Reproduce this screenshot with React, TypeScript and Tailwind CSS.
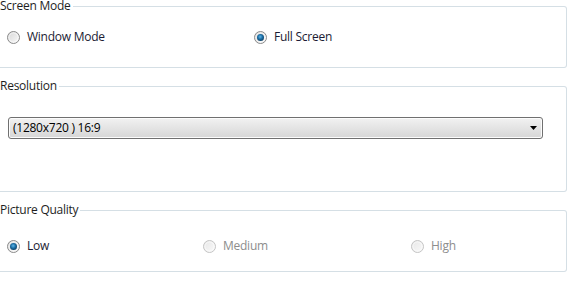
import React from "react";

type RadioState = "off" | "on" | "disabled";

function Radio({ state }: { state: RadioState }) {
  const id = React.useId().replace(/:/g, "");
  const border = state === "disabled" ? "#c4c4c4" : "#8a8a8a";
  return (
    <svg width="13" height="13" viewBox="0 0 13 13" className="shrink-0">
      <defs>
        <linearGradient id={`f${id}`} x1="0" y1="0" x2="1" y2="1">
          <stop offset="0" stopColor={state === "disabled" ? "#e6e6e6" : "#d6d6d6"} />
          <stop offset="1" stopColor={state === "disabled" ? "#fafafa" : "#fbfbfb"} />
        </linearGradient>
        <radialGradient id={`d${id}`} cx="0.45" cy="0.4" r="0.65">
          <stop offset="0" stopColor="#5fb6e8" />
          <stop offset="0.5" stopColor="#1c6fa6" />
          <stop offset="1" stopColor="#0c3a5e" />
        </radialGradient>
      </defs>
      <circle cx="6.5" cy="6.5" r="6" fill={`url(#f${id})`} stroke={border} strokeWidth="1" />
      <circle cx="6.5" cy="6.5" r="4.6" fill="none" stroke="#ffffff" strokeOpacity="0.7" strokeWidth="0.8" />
      {state === "on" && <circle cx="6.5" cy="6.5" r="3.5" fill={`url(#d${id})`} />}
    </svg>
  );
}

function RadioItem({ label, state, className }: { label: string; state: RadioState; className?: string }) {
  return (
    <div className={`flex items-center gap-[7px] ${className ?? ""}`}>
      <Radio state={state} />
      <span className={`text-[12px] leading-[16px] tracking-[-0.25px] ${state === "disabled" ? "text-[#8d8d8d]" : "text-[#1b1b33]"}`}>
        {label}
      </span>
    </div>
  );
}

function Group({ title, className, children }: { title: string; className?: string; children: React.ReactNode }) {
  return (
    <fieldset className={`border border-l-0 border-[#d5dfe5] rounded-r-[3px] ${className ?? ""}`}>
      <legend className="pr-[2px] text-[12px] leading-[12px] tracking-[-0.25px] text-[#1e1e1e]">{title}</legend>
      {children}
    </fieldset>
  );
}

export default function App() {
  return (
    <div
      className="w-[572px] h-[308px] bg-white pr-[5px] flex flex-col"
      style={{ fontFamily: '"Open Sans", "Noto Sans", sans-serif' }}
    >
      <Group title="Screen Mode" className="h-[68px] pt-[17px]">
        <div className="flex pl-[7px]">
          <RadioItem label="Window Mode" state="off" className="w-[247px]" />
          <RadioItem label="Full Screen" state="on" />
        </div>
      </Group>
      <Group title="Resolution" className="mt-[12px] h-[112px] pt-[25px]">
        <div className="ml-[8px] mr-[23px] h-[22px] rounded-[3px] border border-[#707070] bg-gradient-to-b from-[#f2f2f2] to-[#d6d6d6] flex items-center justify-between pl-[4px] pr-[5px] shadow-[inset_0_0_0_1px_#fcfcfc]">
          <span className="text-[12px] leading-[16px] tracking-[-0.25px] text-black">(1280x720 ) 16:9</span>
          <svg width="7" height="4" viewBox="0 0 7 4">
            <path d="M0 0 H7 L3.5 4 Z" fill="#000" />
          </svg>
        </div>
      </Group>
      <Group title="Picture Quality" className="mt-[12px] h-[68px] pt-[22px]">
        <div className="flex pl-[7px]">
          <RadioItem label="Low" state="on" className="w-[196px]" />
          <RadioItem label="Medium" state="disabled" className="w-[208px]" />
          <RadioItem label="High" state="disabled" />
        </div>
      </Group>
    </div>
  );
}
